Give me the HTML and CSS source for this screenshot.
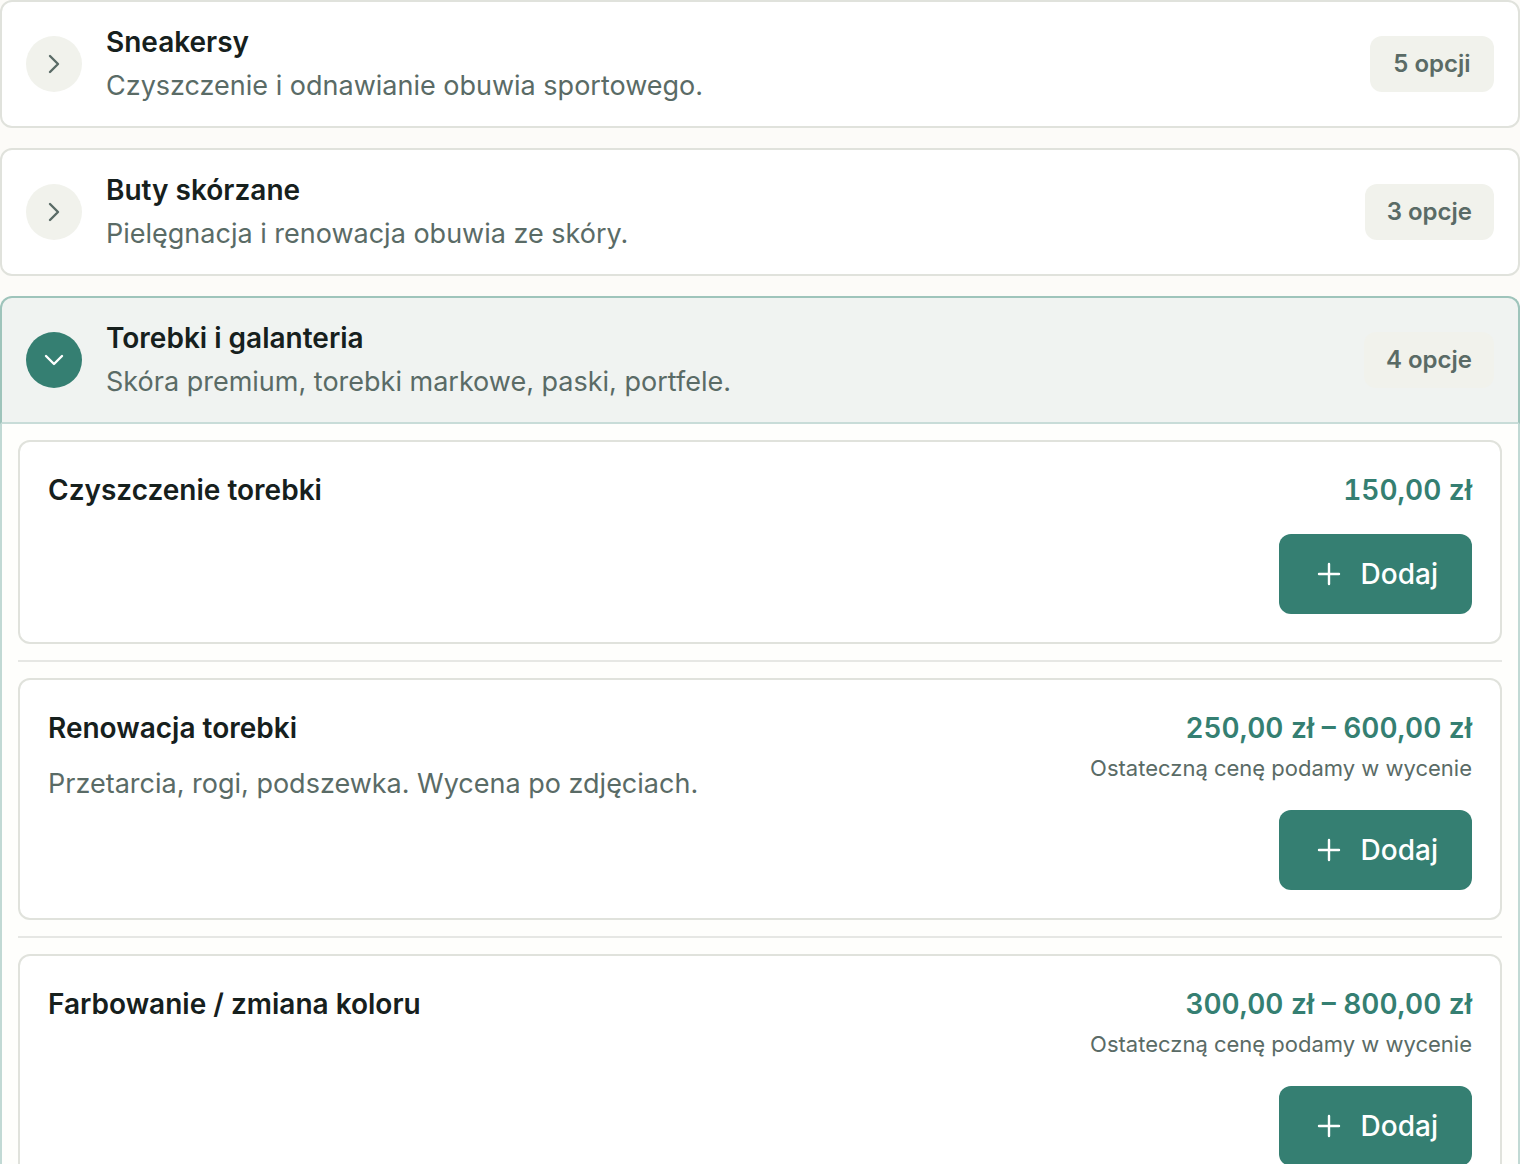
FILE: index.html
```html
<!DOCTYPE html>
<html lang="pl">
<head>
  <meta charset="utf-8">
  <meta name="viewport" content="width=device-width, initial-scale=1">
  <title>Usługi</title>
  <link rel="stylesheet" href="styles.css">
</head>
<body>
  <main class="categories">
    <section class="category">
      <button class="category-header" type="button" aria-expanded="false">
        <span class="toggle">
          <svg class="icon" viewBox="0 0 32 32" aria-hidden="true"><path d="M12 8l8 8-8 8"/></svg>
        </span>
        <span class="category-text">
          <span class="title">Sneakersy</span>
          <span class="description">Czyszczenie i odnawianie obuwia sportowego.</span>
        </span>
        <span class="count">5 opcji</span>
      </button>
    </section>

    <section class="category">
      <button class="category-header" type="button" aria-expanded="false">
        <span class="toggle">
          <svg class="icon" viewBox="0 0 32 32" aria-hidden="true"><path d="M12 8l8 8-8 8"/></svg>
        </span>
        <span class="category-text">
          <span class="title">Buty skórzane</span>
          <span class="description">Pielęgnacja i renowacja obuwia ze skóry.</span>
        </span>
        <span class="count">3 opcje</span>
      </button>
    </section>

    <section class="category category-open">
      <button class="category-header" type="button" aria-expanded="true" aria-controls="bags">
        <span class="toggle">
          <svg class="icon" viewBox="0 0 32 32" aria-hidden="true"><path d="M8 12l8 8 8-8"/></svg>
        </span>
        <span class="category-text">
          <span class="title">Torebki i galanteria</span>
          <span class="description">Skóra premium, torebki markowe, paski, portfele.</span>
        </span>
        <span class="count">4 opcje</span>
      </button>

      <ul class="services" id="bags">
        <li class="service-row">
          <article class="service">
            <div class="service-text">
              <h3 class="title">Czyszczenie torebki</h3>
            </div>
            <div class="service-side">
              <div class="pricing">
                <span class="price">150,00 zł</span>
              </div>
              <button class="add" type="button">
                <svg class="icon" viewBox="0 0 32 32" aria-hidden="true"><path d="M16 6v20M6 16h20"/></svg>
                Dodaj
              </button>
            </div>
          </article>
        </li>
        <li class="service-row">
          <article class="service">
            <div class="service-text">
              <h3 class="title">Renowacja torebki</h3>
              <p class="description">Przetarcia, rogi, podszewka. Wycena po zdjęciach.</p>
            </div>
            <div class="service-side">
              <div class="pricing">
                <span class="price">250,00 zł – 600,00 zł</span>
                <span class="note">Ostateczną cenę podamy w wycenie</span>
              </div>
              <button class="add" type="button">
                <svg class="icon" viewBox="0 0 32 32" aria-hidden="true"><path d="M16 6v20M6 16h20"/></svg>
                Dodaj
              </button>
            </div>
          </article>
        </li>
        <li class="service-row">
          <article class="service">
            <div class="service-text">
              <h3 class="title">Farbowanie / zmiana koloru</h3>
            </div>
            <div class="service-side">
              <div class="pricing">
                <span class="price">300,00 zł – 800,00 zł</span>
                <span class="note">Ostateczną cenę podamy w wycenie</span>
              </div>
              <button class="add" type="button">
                <svg class="icon" viewBox="0 0 32 32" aria-hidden="true"><path d="M16 6v20M6 16h20"/></svg>
                Dodaj
              </button>
            </div>
          </article>
        </li>
      </ul>
    </section>
  </main>
</body>
</html>
```
FILE: styles.css
```css
* {
  box-sizing: border-box;
}

body {
  margin: 0;
  background: #fcfbf8;
  color: #16201d;
  font-family: Inter, "Liberation Sans", sans-serif;
  font-size: 28px;
  line-height: 40px;
}

button {
  border: 0;
  font: inherit;
  color: inherit;
  cursor: pointer;
}

.categories {
  display: flex;
  flex-direction: column;
  gap: 20px;
}

.category-header {
  display: flex;
  align-items: center;
  gap: 24px;
  width: 100%;
  padding: 20px 24px;
  border: 2px solid #e0e2dc;
  border-radius: 12px;
  background: #fff;
  text-align: left;
}

.category-text {
  display: flex;
  flex: 1;
  flex-direction: column;
  gap: 4px;
}

.toggle {
  display: flex;
  align-items: center;
  justify-content: center;
  width: 56px;
  height: 56px;
  border-radius: 50%;
  background: #f1f2ec;
  color: #5a6b66;
}

.icon {
  width: 32px;
  height: 32px;
  fill: none;
  stroke: currentColor;
  stroke-width: 2.4;
  stroke-linecap: round;
  stroke-linejoin: round;
}

.title {
  margin: 0;
  font-size: 28px;
  font-weight: 600;
}

.description {
  margin: 0;
  color: #5a6b66;
  font-size: 27px;
}

.count {
  min-width: 124px;
  padding: 8px 22px;
  border-radius: 12px;
  background: #f1f2ec;
  color: #5a6b66;
  font-size: 24px;
  font-weight: 600;
  text-align: center;
}

.category-open .category-header {
  border-color: #9ec4bb;
  border-bottom-color: #c8dcd8;
  border-radius: 12px 12px 0 0;
  background: #f0f3f1;
}

.category-open .toggle {
  background: #357f72;
  color: #fff;
}

.services {
  margin: 0;
  padding: 16px;
  border: 2px solid #c1d9d4;
  border-top: 0;
  border-radius: 0 0 12px 12px;
  background: #fefefc;
  list-style: none;
}

.service-row + .service-row {
  margin-top: 16px;
  padding-top: 16px;
  border-top: 2px solid #e6e7e4;
}

.service {
  display: flex;
  justify-content: space-between;
  gap: 24px;
  padding: 28px;
  border: 2px solid #e0e2dc;
  border-radius: 12px;
  background: #fff;
}

.service-text {
  display: flex;
  flex-direction: column;
  gap: 16px;
}

.service-side {
  display: flex;
  flex-direction: column;
  align-items: flex-end;
  gap: 24px;
}

.pricing {
  display: flex;
  flex-direction: column;
  align-items: flex-end;
  gap: 2px;
}

.price {
  color: #357f72;
  font-weight: 600;
  font-optical-sizing: none;
  font-variant-numeric: tabular-nums;
}

.note {
  color: #5a6b66;
  font-size: 22px;
  line-height: 36px;
}

.add {
  display: flex;
  align-items: center;
  gap: 16px;
  padding: 20px 34px;
  border-radius: 12px;
  background: #357f72;
  color: #fff;
  font-weight: 500;
}
```
